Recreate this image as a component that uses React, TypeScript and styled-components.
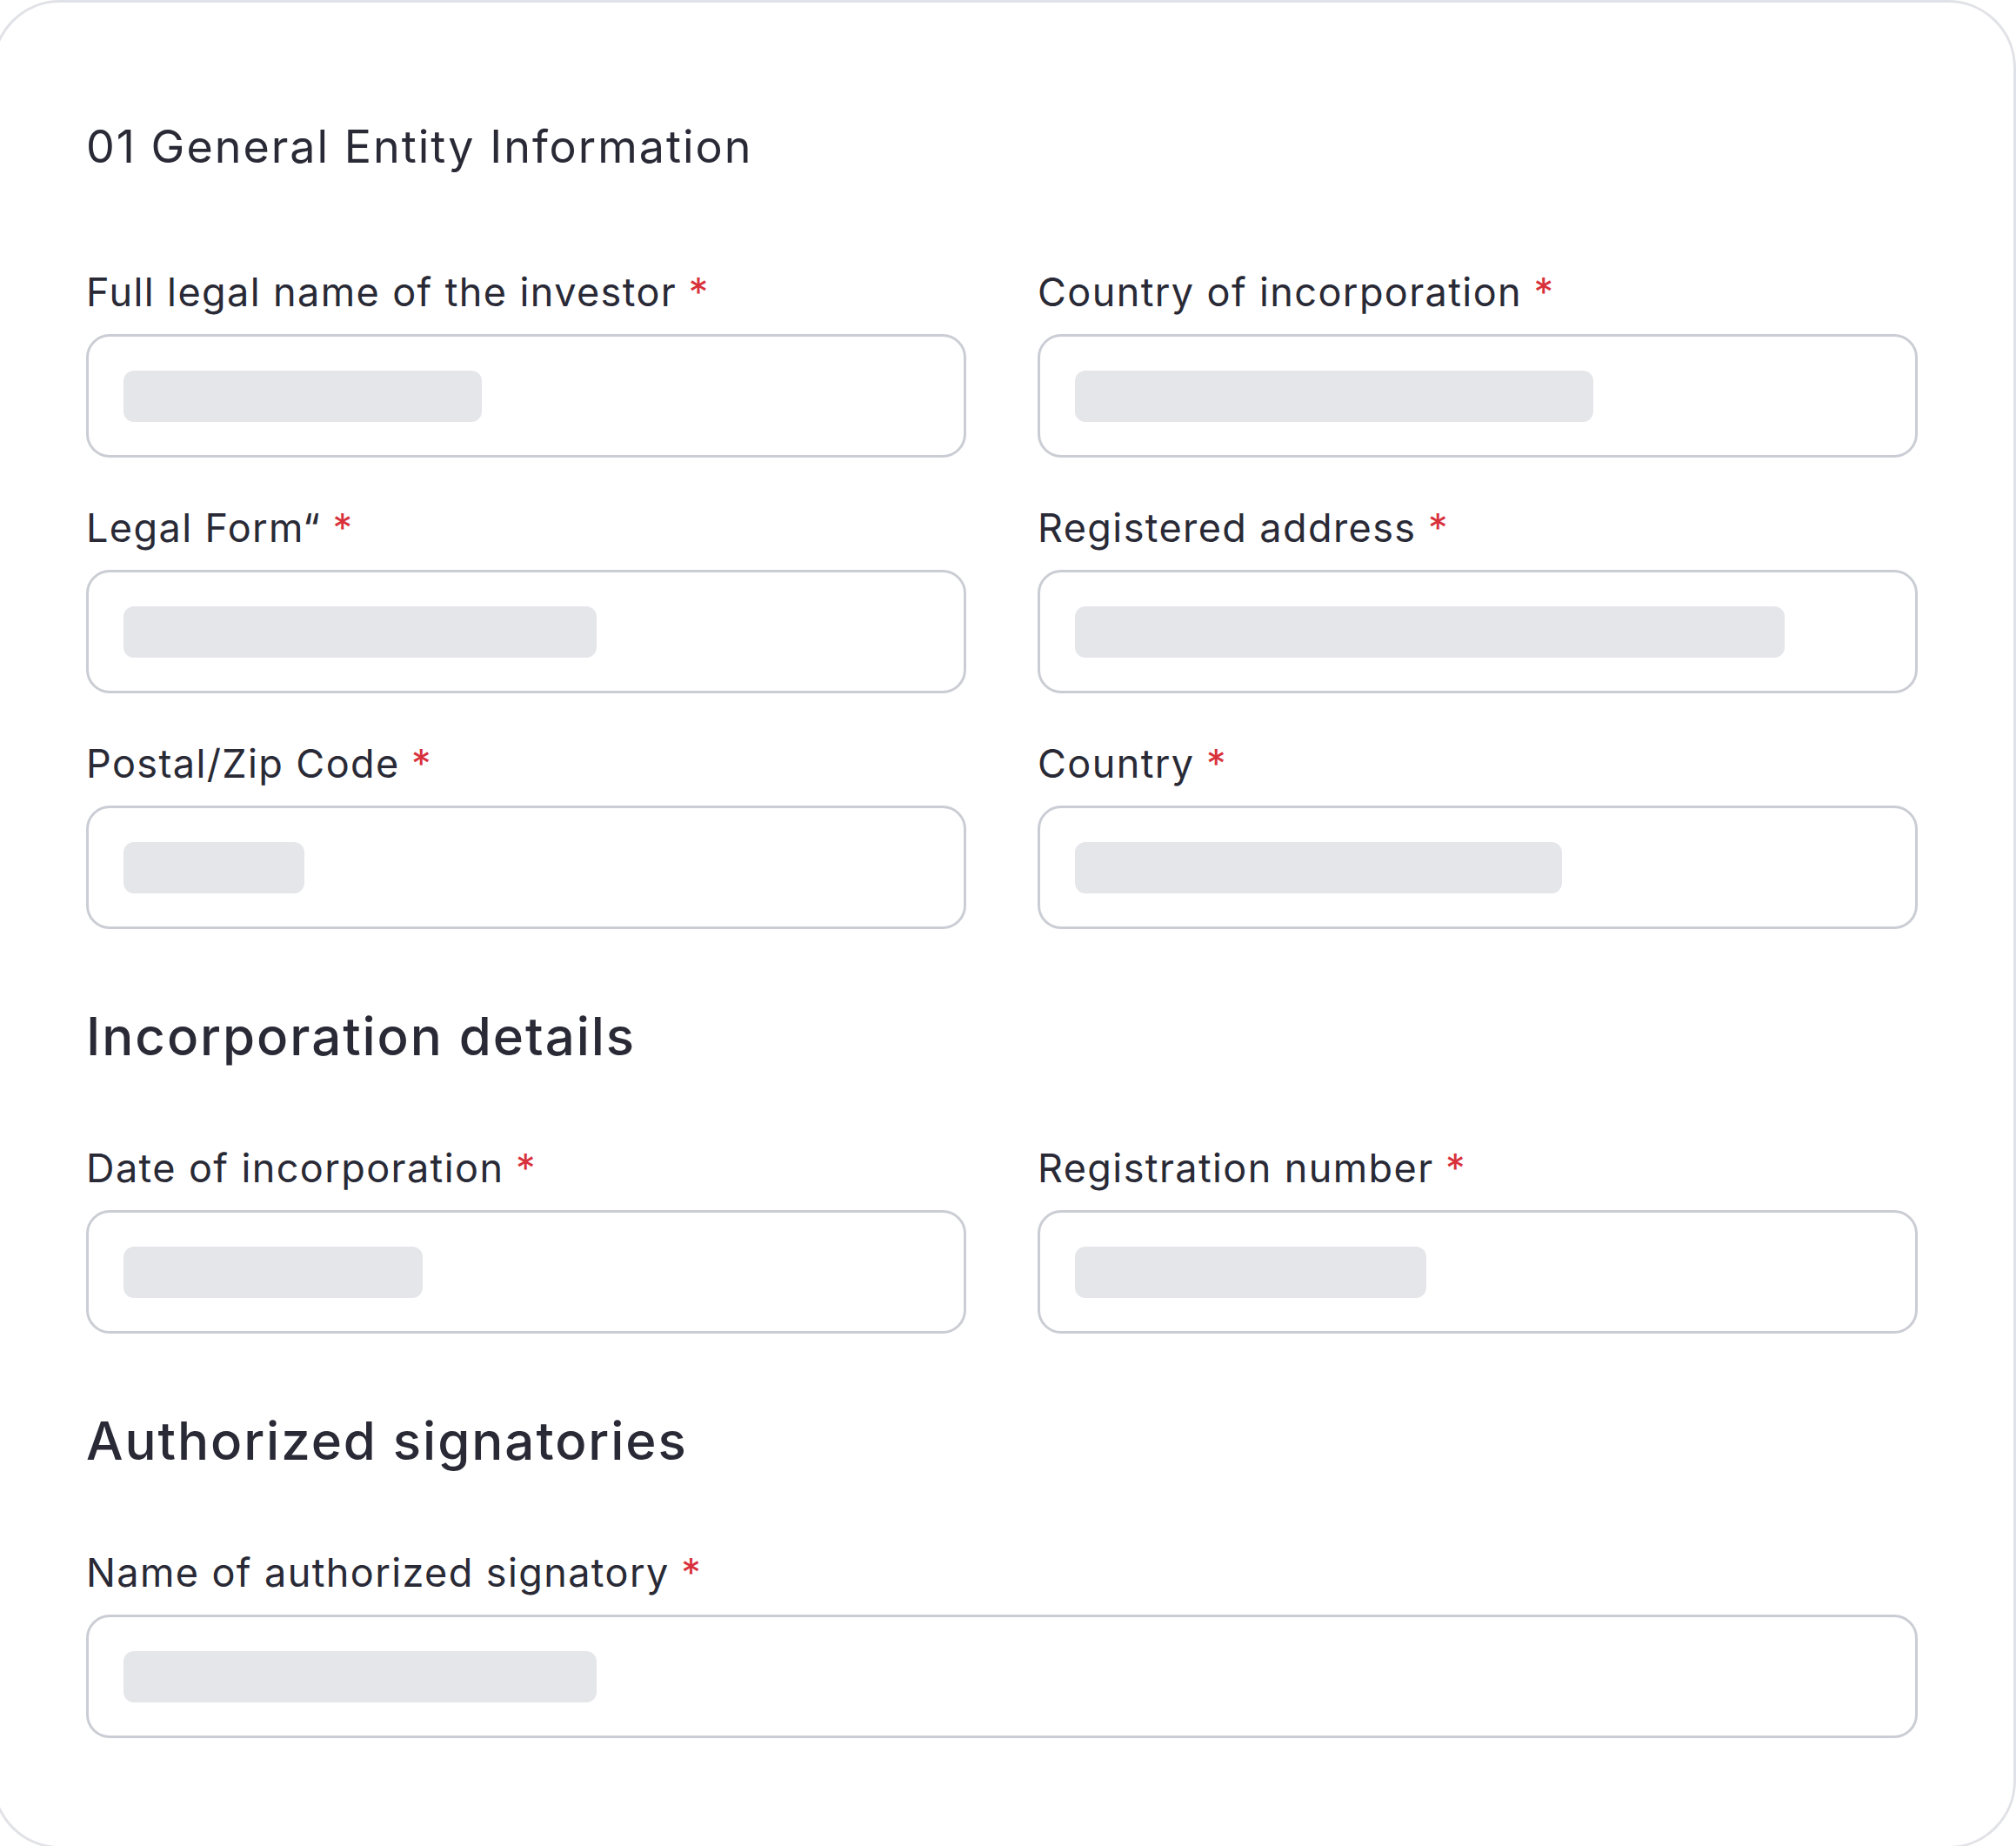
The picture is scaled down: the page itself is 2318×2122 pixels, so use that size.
import React from 'react';
import styled, { createGlobalStyle } from 'styled-components';

const GlobalStyle = createGlobalStyle`
  html, body {
    margin: 0;
    padding: 0;
    background: #ffffff;
  }
  body {
    font-family: Inter, 'Noto Sans', sans-serif;
    color: #292a36;
    overflow: hidden;
  }
`;

type Field = {
  label: string;
  bar: number;
  wide?: boolean;
};

const generalFields: Field[] = [
  { label: 'Full legal name of the investor', bar: 412 },
  { label: 'Country of incorporation', bar: 596 },
  { label: 'Legal Form“', bar: 544 },
  { label: 'Registered address', bar: 816 },
  { label: 'Postal/Zip Code', bar: 208 },
  { label: 'Country', bar: 560 },
];

const incorporationFields: Field[] = [
  { label: 'Date of incorporation', bar: 344 },
  { label: 'Registration number', bar: 404 },
];

const signatoryFields: Field[] = [
  { label: 'Name of authorized signatory', bar: 544, wide: true },
];

const FormField: React.FC<{ field: Field }> = ({ field }) => (
  <FieldBox $wide={field.wide}>
    <Label>
      {field.label}
      <Required>*</Required>
    </Label>
    <InputBox>
      <Skeleton $width={field.bar} />
    </InputBox>
  </FieldBox>
);

const App: React.FC = () => {
  return (
    <>
      <GlobalStyle />
      <Card>
        <Title>01 General Entity Information</Title>
        <FieldGrid>
          {generalFields.map((f) => (
            <FormField key={f.label} field={f} />
          ))}
        </FieldGrid>
        <SectionHeading>Incorporation details</SectionHeading>
        <FieldGrid>
          {incorporationFields.map((f) => (
            <FormField key={f.label} field={f} />
          ))}
        </FieldGrid>
        <SectionHeading>Authorized signatories</SectionHeading>
        <FieldGrid>
          {signatoryFields.map((f) => (
            <FormField key={f.label} field={f} />
          ))}
        </FieldGrid>
      </Card>
    </>
  );
};

export default App;

const Card = styled.section`
  box-sizing: border-box;
  width: 2327px;
  height: 2125px;
  margin-left: -9px;
  padding: 134px 110px 0 105px;
  background: #ffffff;
  border: 3px solid #e1e2e7;
  border-radius: 78px;
`;

const Title = styled.h1`
  margin: 0 0 109px;
  font-size: 52px;
  line-height: 63px;
  font-weight: 400;
  letter-spacing: 2px;
  color: #292a36;
`;

const SectionHeading = styled.h2`
  margin: 87px 0 88px;
  font-size: 60px;
  line-height: 73px;
  font-weight: 500;
  letter-spacing: 1.95px;
  color: #292a36;
`;

const FieldGrid = styled.div`
  display: grid;
  grid-template-columns: 1fr 1fr;
  column-gap: 82px;
  row-gap: 54px;
`;

const FieldBox = styled.div<{ $wide?: boolean }>`
  display: flex;
  flex-direction: column;
  gap: 21px;
  grid-column: ${(p) => (p.$wide ? '1 / -1' : 'auto')};
`;

const Label = styled.label`
  font-size: 45px;
  line-height: 54px;
  font-weight: 400;
  letter-spacing: 1.4px;
  color: #292a36;
  white-space: nowrap;
`;

const Required = styled.span`
  color: #d8313b;
  margin-left: 0.3em;
`;

const InputBox = styled.div`
  box-sizing: border-box;
  height: 142px;
  display: flex;
  align-items: center;
  padding: 0 40px;
  border: 3px solid #cbcdd5;
  border-radius: 27px;
  background: #ffffff;
`;

const Skeleton = styled.div<{ $width: number }>`
  width: ${(p) => p.$width}px;
  height: 59px;
  border-radius: 12px;
  background: #e5e6ea;
`;
